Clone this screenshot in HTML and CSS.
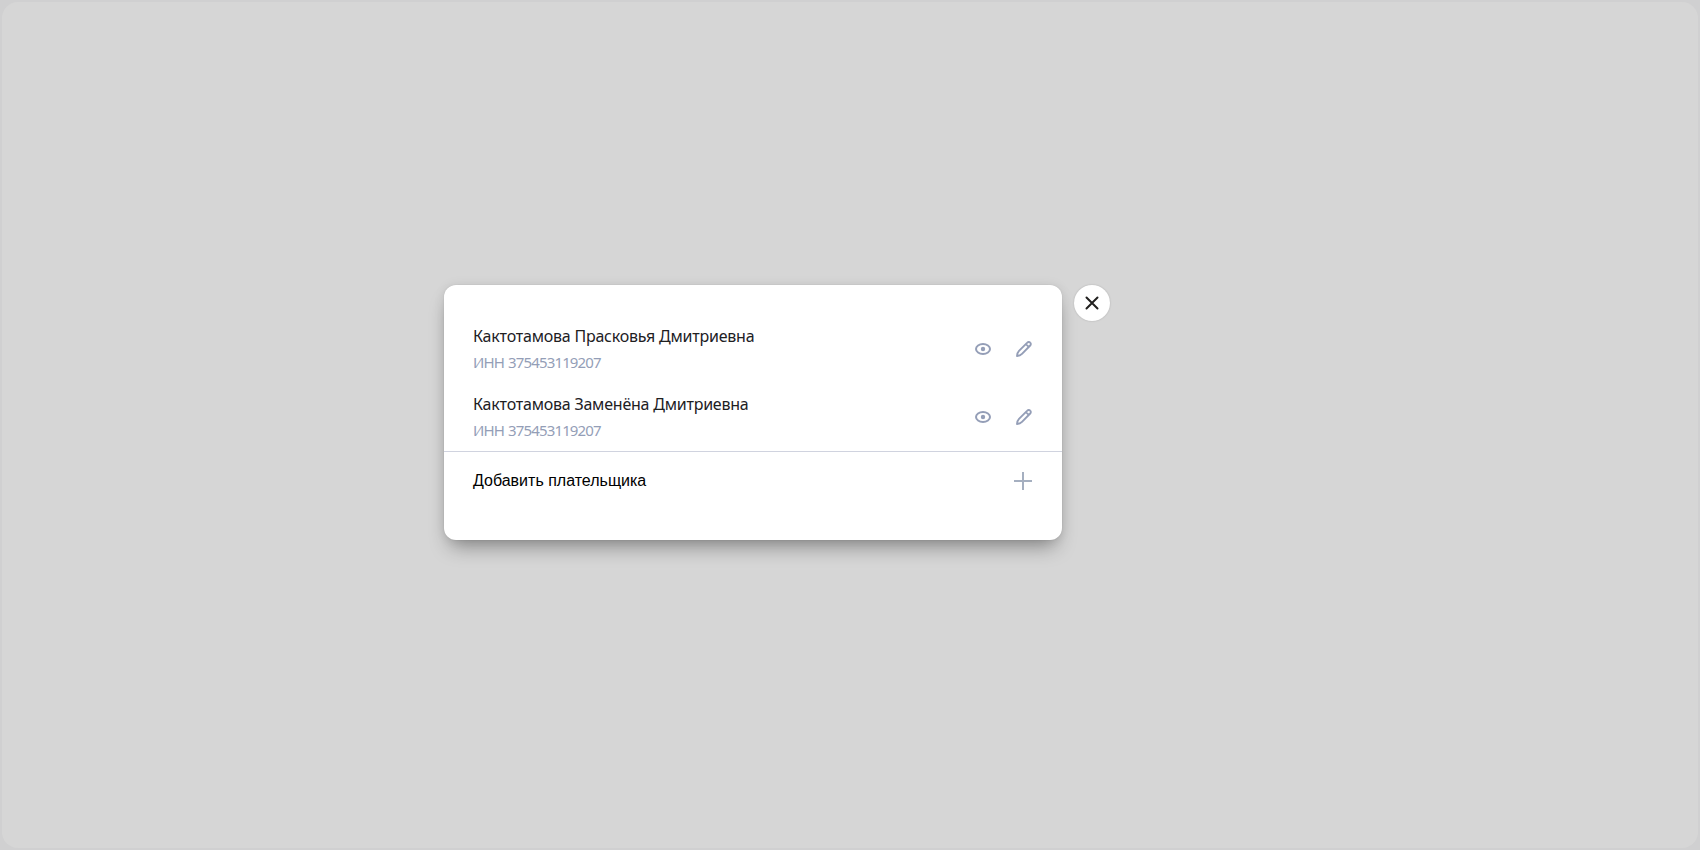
FILE: index.html
```
<!DOCTYPE html>
<html lang="ru">
<head>
<meta charset="utf-8">
<title>Плательщики</title>
<link rel="stylesheet" href="styles.css">
</head>
<body>
<svg class="sprite" aria-hidden="true">
  <symbol id="eye" viewBox="0 0 16 12"><ellipse cx="8" cy="6" rx="7" ry="5" fill="none" stroke="currentColor" stroke-width="2"/><circle cx="8" cy="6" r="2.200" fill="currentColor"/></symbol>
  <symbol id="pencil" viewBox="0 0 16 16"><path d="M1 15c.1-2.200.7-3.900 2-5.200l8.300-8.200a2 2 0 0 1 2.900 0 2 2 0 0 1 0 2.900L6 12.800C4.700 14.100 3.100 14.800 1 15ZM10 3.200l2.700 2.700" fill="none" stroke="currentColor" stroke-width="1.900" stroke-linejoin="round"/></symbol>
</svg>
<main class="page">
  <div class="dialog">
    <section class="card">
      <div class="payer">
        <div class="info"><div class="name">Кактотамова Прасковья Дмитриевна</div><div class="inn">ИНН 375453119207</div></div>
        <svg class="eye"><use href="#eye"/></svg><svg class="pencil"><use href="#pencil"/></svg>
      </div>
      <div class="payer">
        <div class="info"><div class="name">Кактотамова Заменёна Дмитриевна</div><div class="inn">ИНН 375453119207</div></div>
        <svg class="eye"><use href="#eye"/></svg><svg class="pencil"><use href="#pencil"/></svg>
      </div>
      <div class="add"><span>Добавить плательщика</span><svg class="plus" viewBox="0 0 18 18"><path d="M9 0v18M0 9h18" stroke="currentColor" stroke-width="2"/></svg></div>
    </section>
    <button class="close" aria-label="Закрыть"><svg viewBox="0 0 14 14"><path d="M1.500 1.500l11 11M12.500 1.500l-11 11" stroke="currentColor" stroke-width="2" stroke-linecap="round"/></svg></button>
  </div>
</main>
</body>
</html>
```
FILE: styles.css
```
* { box-sizing: border-box; }
body { margin: 0; padding: 2px; height: 850px; background: #d0d0d1; overflow: hidden; }
.sprite { position: absolute; width: 0; height: 0; }
.page { height: 846px; border-radius: 16px; background: #d6d6d6; padding: 283px 0 0 442px; }
.dialog { display: flex; align-items: flex-start; gap: 12px; }
.card { width: 618px; height: 255px; padding-top: 30px; border-radius: 12px; background: #fff; box-shadow: 0 12px 20px -6px rgba(0,0,0,.38), 0 0 12px rgba(0,0,0,.07), 0 0 2px rgba(0,0,0,.1); font-family: "Noto Sans", sans-serif; }
.payer { height: 68px; padding: 0 30px 0 29px; display: flex; align-items: center; color: #949eb7; }
.info { flex: 1; margin-top: -1px; }
.name { font-size: 16px; line-height: 24px; letter-spacing: -.22px; color: #21201f; white-space: nowrap; }
.inn { margin-top: 3px; margin-bottom: 1px; font-size: 15px; line-height: 22px; letter-spacing: -.86px; word-spacing: 1px; }
.eye { width: 16px; height: 12px; margin-right: 25px; }
.pencil { width: 16px; height: 16px; }
.add { height: 59px; padding: 0 30px 0 29px; border-top: 1px solid #d0d3df; display: flex; align-items: center; justify-content: space-between; font: 16px "Liberation Sans", Arial, sans-serif; color: #000; }
.plus { width: 18px; height: 18px; color: #a5afc0; }
.close { width: 36px; height: 36px; padding: 0; border: 0; border-radius: 50%; background: #fff; color: #21201f; display: flex; align-items: center; justify-content: center; box-shadow: 0 0 2px rgba(0,0,0,.2); }
.close svg { width: 14px; height: 14px; }
```
